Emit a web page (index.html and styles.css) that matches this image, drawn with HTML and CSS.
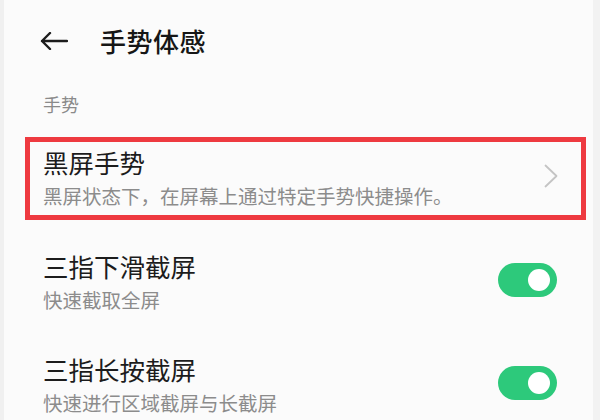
FILE: index.html
```html
<!DOCTYPE html>
<html lang="zh-CN">
<head>
<meta charset="utf-8">
<title>手势体感</title>
<link rel="stylesheet" href="styles.css">
</head>
<body>
<div class="page">
  <header class="topbar">
    <svg class="back" width="28" height="18" viewBox="0 0 28 18" aria-hidden="true">
      <path d="M27 9H2M10 1L2 9L10 17" fill="none" stroke="#1c1c1c" stroke-width="2.4" stroke-linecap="round" stroke-linejoin="round"/>
    </svg>
    <h1 class="title">手势体感</h1>
  </header>

  <div class="section-label">手势</div>

  <div class="row-wrap">
    <div class="row row-boxed">
      <div class="text">
        <div class="item-title">黑屏手势</div>
        <div class="item-sub">黑屏状态下，在屏幕上通过特定手势快捷操作。</div>
      </div>
      <svg class="chevron" width="14" height="24" viewBox="0 0 14 24" aria-hidden="true">
        <path d="M1.5 1.5L12.5 12L1.5 22.5" fill="none" stroke="#c4c4c4" stroke-width="1.8" stroke-linecap="round" stroke-linejoin="round"/>
      </svg>
    </div>
  </div>

  <div class="row row-plain">
    <div class="text">
      <div class="item-title">三指下滑截屏</div>
      <div class="item-sub">快速截取全屏</div>
    </div>
    <div class="toggle"><span class="knob"></span></div>
  </div>

  <div class="row row-plain">
    <div class="text">
      <div class="item-title">三指长按截屏</div>
      <div class="item-sub">快速进行区域截屏与长截屏</div>
    </div>
    <div class="toggle"><span class="knob"></span></div>
  </div>
</div>
</body>
</html>
```

FILE: styles.css
```css
* { box-sizing: border-box; }

html, body {
  margin: 0;
  padding: 0;
  background: #fbfbfb;
}

body {
  font-family: "Noto Sans CJK SC", "Noto Sans", sans-serif;
  color: #1c1c1c;
}

.page {
  width: 600px;
  height: 420px;
  overflow: hidden;
  background: #fbfbfb;
  border-left: 4px solid #f0f0f0;
  border-right: 7px solid #f2f2f2;
}

.topbar {
  height: 80px;
  display: flex;
  align-items: center;
  padding-left: 36px;
  padding-top: 2px;
}

.back {
  flex: none;
  margin-right: 32px;
}

.title {
  margin: 0;
  font-size: 26px;
  font-weight: 500;
  line-height: 34px;
  letter-spacing: 0.5px;
  color: #161616;
}

.section-label {
  height: 47px;
  padding-top: 12px;
  padding-left: 39px;
  font-size: 18px;
  line-height: 24px;
  color: #8a8a8a;
}

.row-wrap {
  height: 103px;
  padding: 10px 7px 10px 21px;
}

.row {
  display: flex;
  align-items: center;
  justify-content: space-between;
}

.row-boxed {
  height: 83px;
  border: 5px solid #ee3a40;
  padding: 0 23px 2px 13px;
}

.row-plain {
  height: 103px;
  padding: 0 36px 0 39px;
}

.text {
  display: flex;
  flex-direction: column;
  gap: 2px;
}

.item-title {
  font-size: 25.5px;
  line-height: 34px;
  color: #1c1c1c;
}

.item-sub {
  font-size: 19.5px;
  line-height: 30px;
  color: #8c8c8c;
}

.chevron {
  flex: none;
  margin-bottom: 4px;
}

.toggle {
  flex: none;
  width: 59px;
  height: 34px;
  border-radius: 17px;
  background: #2dc97b;
  display: flex;
  align-items: center;
  justify-content: flex-end;
  padding-right: 7px;
  margin-bottom: 4px;
}

.knob {
  width: 22px;
  height: 22px;
  border-radius: 50%;
  background: #ffffff;
}
```
